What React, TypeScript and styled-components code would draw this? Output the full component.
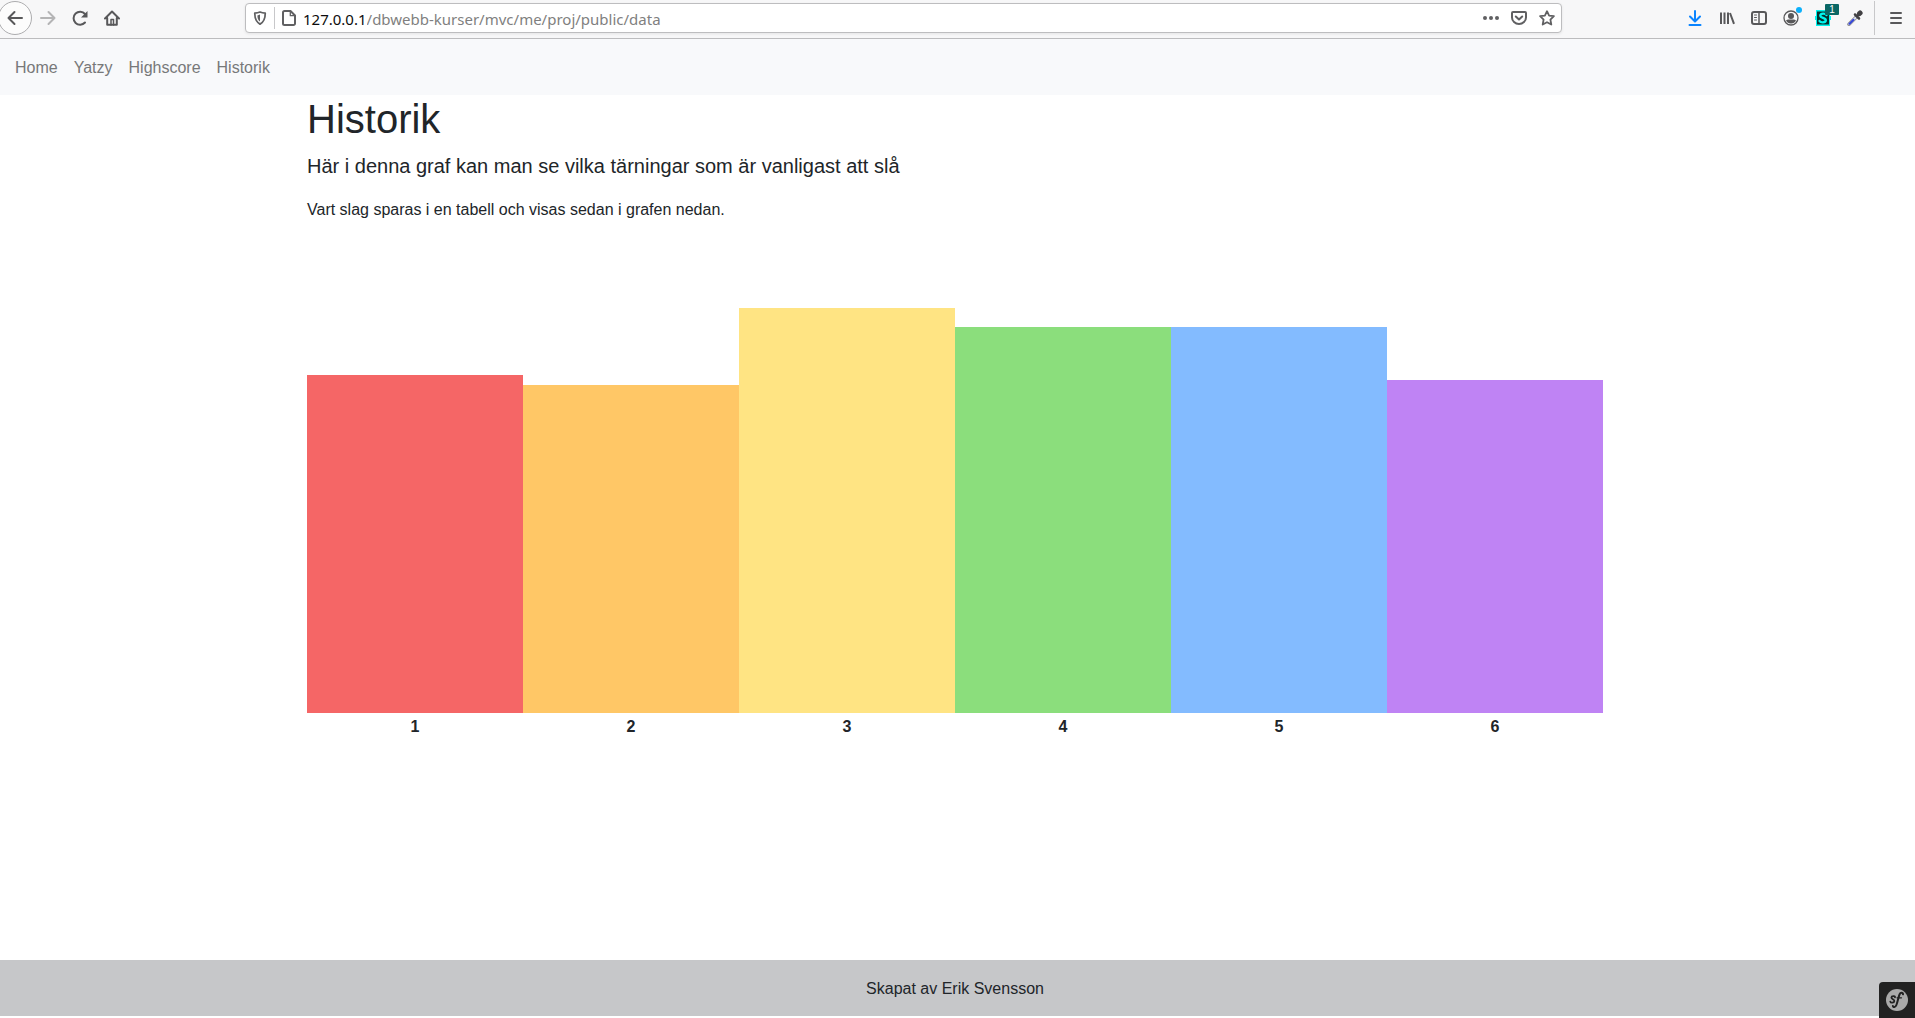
import React from 'react';
import styled, { createGlobalStyle } from 'styled-components';

const GlobalStyle = createGlobalStyle`
  *, *::before, *::after { box-sizing: border-box; }
  body {
    margin: 0;
    background: #fff;
    color: #212529;
    font-family: "Liberation Sans", Arial, sans-serif;
    font-size: 16px;
    line-height: 24px;
  }
`;

const Page = styled.div`
  display: flex;
  flex-direction: column;
  min-height: 100vh;
  padding-bottom: 2px;
  overflow-x: hidden;
`;

const Toolbar = styled.header`
  display: flex;
  align-items: center;
  height: 39px;
  padding: 0 3px 2px 0;
  background: #f7f7f8;
  border-bottom: 1px solid #bcbcbe;
`;

const ToolGroup = styled.div`
  display: flex;
  align-items: center;
`;

const ToolButton = styled.button<{ $muted?: boolean }>`
  position: relative;
  display: flex;
  align-items: center;
  justify-content: center;
  width: 32px;
  height: 32px;
  padding: 0;
  border: 0;
  background: none;
  color: ${(p) => (p.$muted ? '#b4b4b5' : '#58585a')};
`;

const BackButton = styled(ToolButton)`
  width: 34px;
  height: 34px;
  margin-left: -2px;
  border: 1px solid #adadaf;
  border-radius: 50%;
  background: #fcfcfc;
`;

const Separator = styled.span<{ $tall?: boolean }>`
  width: 1px;
  height: ${(p) => (p.$tall ? 34 : 22)}px;
  margin: ${(p) => (p.$tall ? '0 5px 0 3px' : '0')};
  background: #c8c8ca;
`;

const AddressBar = styled.form`
  display: flex;
  flex: 1;
  align-items: center;
  min-width: 0;
  height: 30px;
  margin: 0 117px;
  background: #fff;
  border: 1px solid #bdbdbf;
  border-radius: 4px;
  box-shadow: 0 1px 3px rgba(0, 0, 0, 0.08);
`;

const SmallButton = styled(ToolButton)`
  width: 28px;
  height: 28px;
  color: #606062;
`;

const AddressText = styled.div`
  display: flex;
  flex: 1;
  min-width: 0;
  padding-top: 1px;
  font-family: "Noto Sans", "Open Sans", sans-serif;
  font-size: 15px;
  line-height: 28px;
`;

const Host = styled.label`
  color: #0c0c0d;
`;

const PathInput = styled.input`
  flex: 1;
  min-width: 0;
  height: 28px;
  padding: 0;
  border: 0;
  outline: 0;
  background: none;
  color: #7f7f80;
  font: inherit;
`;

const Notice = styled.span`
  position: absolute;
  top: 5px;
  right: 5px;
  width: 6px;
  height: 6px;
  border-radius: 50%;
  background: #0cb0fb;
`;

const Badge = styled.span`
  position: absolute;
  top: 2px;
  right: 0;
  width: 14px;
  height: 11px;
  border-radius: 1px;
  background: #0a6765;
  color: #fff;
  font-size: 10px;
  line-height: 11px;
  text-align: center;
`;

const Nav = styled.nav`
  display: flex;
  gap: 16px;
  padding: 17px 15px 15px;
  background: #f8f9fb;
`;

const NavLink = styled.a`
  color: #777879;
  text-decoration: none;
`;

const Main = styled.main`
  display: flex;
  flex: 1;
  flex-direction: column;
  width: 100%;
  max-width: 1301px;
  margin: 0 auto;
  padding-right: 5px;
`;

const Title = styled.h1`
  margin: 0 0 8px;
  font-size: 40px;
  font-weight: 400;
  line-height: 48px;
`;

const Lead = styled.p`
  margin: 0 0 17px;
  font-size: 20px;
  line-height: 30px;
`;

const Text = styled.p`
  margin: 0;
`;

const Chart = styled.div`
  display: flex;
  align-items: flex-end;
  height: 517px;
`;

const Column = styled.div`
  flex: 1;
  font-weight: 700;
  text-align: center;
`;

const Bar = styled.div<{ $color: string }>`
  margin-bottom: 2px;
  background: ${(p) => p.$color};
`;

const Footer = styled.footer`
  padding: 17px 5px 15px 0;
  background: #c6c7c9;
  text-align: center;
`;

const ProfilerButton = styled.button`
  position: fixed;
  right: 0;
  bottom: 0;
  display: flex;
  align-items: center;
  justify-content: center;
  width: 36px;
  height: 36px;
  padding: 0;
  border: 0;
  border-radius: 4px 0 0 0;
  background: #222;
`;

const links = ['Home', 'Yatzy', 'Highscore', 'Historik'];

const rolls = [
  { face: 1, height: 338, color: '#f56666' },
  { face: 2, height: 328, color: '#ffc766' },
  { face: 3, height: 405, color: '#ffe483' },
  { face: 4, height: 386, color: '#8bde7c' },
  { face: 5, height: 386, color: '#83bbff' },
  { face: 6, height: 333, color: '#bf83f4' },
];

function Icon({ children, size = 16 }: { children: React.ReactNode; size?: number }) {
  return (
    <svg
      width={size}
      height={size}
      viewBox="0 0 16 16"
      fill="none"
      stroke="currentColor"
      strokeWidth="2"
      strokeLinecap="round"
      strokeLinejoin="round"
      aria-hidden="true"
    >
      {children}
    </svg>
  );
}

function BrowserBar() {
  return (
    <Toolbar>
      <ToolGroup>
        <BackButton aria-label="Back">
          <Icon><path d="M15 8H1.500M7.500 2 1.500 8l6 6" /></Icon>
        </BackButton>
        <ToolButton $muted aria-label="Forward">
          <Icon><path d="M1 8h13.500M8.500 2l6 6-6 6" /></Icon>
        </ToolButton>
        <ToolButton aria-label="Reload">
          <Icon>
            <path d="M13 12.500A6.500 6.500 0 1 1 13 4" />
            <path d="M15.500 1v6.500H9z" fill="currentColor" stroke="none" />
          </Icon>
        </ToolButton>
        <ToolButton aria-label="Home page">
          <Icon>
            <path d="M1 8.500 8 1.500l7 7M3.200 8v6.800h9.600V8" />
            <path d="M7 15V9.500h2.500V15" strokeWidth="1.500" />
          </Icon>
        </ToolButton>
      </ToolGroup>

      <AddressBar onSubmit={(e) => e.preventDefault()}>
        <SmallButton type="button" aria-label="Tracking protection">
          <Icon size={14}>
            <path d="M8 1.200c2 .9 4 1.200 6 1.300C14 8.500 12.500 12.500 8 15 3.500 12.500 2 8.500 2 2.500c2-.1 4-.4 6-1.300z" />
            <path d="M8 4v8C5.800 10.300 5 8 5 5z" fill="currentColor" stroke="none" />
          </Icon>
        </SmallButton>
        <Separator />
        <SmallButton type="button" aria-label="Site information">
          <Icon>
            <path d="M3.500 1h6L14 5.500v8a1.500 1.500 0 0 1-1.500 1.500h-9A1.500 1.500 0 0 1 2 13.500v-11A1.500 1.500 0 0 1 3.500 1z" />
            <path d="M9.300 1.500v4.200h4.200" strokeWidth="1.300" />
          </Icon>
        </SmallButton>
        <AddressText>
          <Host htmlFor="path">127.0.0.1</Host>
          <PathInput id="path" defaultValue="/dbwebb-kurser/mvc/me/proj/public/data" />
        </AddressText>
        <SmallButton type="button" aria-label="Page actions">
          <Icon>
            <g fill="currentColor" stroke="none">
              <circle cx="2" cy="8" r="2" />
              <circle cx="8" cy="8" r="2" />
              <circle cx="14" cy="8" r="2" />
            </g>
          </Icon>
        </SmallButton>
        <SmallButton type="button" aria-label="Save to Pocket">
          <Icon>
            <path d="M2 2h12a1 1 0 0 1 1 1v4.500a7 6.500 0 0 1-14 0V3a1 1 0 0 1 1-1z" />
            <path d="m4.800 6.500 3.200 3 3.200-3" />
          </Icon>
        </SmallButton>
        <SmallButton type="button" aria-label="Bookmark">
          <Icon>
            <path d="m8 1.200 2.100 4.400 4.800.6-3.500 3.400.9 4.900L8 12.200l-4.300 2.300.9-4.900L1.100 6.200l4.800-.6z" strokeWidth="1.800" />
          </Icon>
        </SmallButton>
      </AddressBar>

      <ToolGroup>
        <ToolButton aria-label="Downloads">
          <Icon>
            <path d="M8 1v10M3 6.500l5 5 5-5M2.500 15h11" stroke="#0a84ff" />
          </Icon>
        </ToolButton>
        <ToolButton aria-label="Library">
          <Icon>
            <path d="M2 2.500v11.500M5.500 2.500v11.500M9 2.500v11.500M11 3l4 10.800" strokeLinecap="butt" />
          </Icon>
        </ToolButton>
        <ToolButton aria-label="Sidebars">
          <Icon>
            <rect x="1" y="2" width="14" height="12" rx="2" />
            <path d="M8 2v12" strokeWidth="1.500" />
            <path d="M3.500 5h2M3.500 7.500h2M3.500 10h2" strokeWidth="1" />
          </Icon>
        </ToolButton>
        <ToolButton aria-label="Account">
          <Icon>
            <circle cx="8" cy="8" r="7" strokeWidth="1.300" />
            <circle cx="8" cy="6" r="3" fill="currentColor" stroke="none" />
            <path d="M3 10.500c1.500-1.300 2-1 5-1s3.500-.3 5 1A5.500 5.500 0 0 1 8 13.500a5.500 5.500 0 0 1-5-3z" fill="currentColor" stroke="none" />
          </Icon>
          <Notice />
        </ToolButton>
        <ToolButton aria-label="Stylus">
          <Icon>
            <path d="M1 0h14v6h1v4h-1v6H1v-6H0V6h1z" fill="#00f5ee" stroke="none" />
            <path d="M2 1.500h12v13H2z" fill="#07312f" stroke="none" />
            <path d="M11.500 5C10.500 3 5 3 5.300 5.800 5.600 8.300 11 7.500 10.800 10.400 10.600 13 5.500 12.800 4.500 11" stroke="#00f5ee" strokeWidth="2.400" />
          </Icon>
          <Badge>1</Badge>
        </ToolButton>
        <ToolButton aria-label="Color picker">
          <Icon>
            <path d="M2 14.200 9.300 7" stroke="#8e8e92" strokeWidth="3.600" />
            <path d="M2.200 14 8.800 7.500" stroke="#dce3f5" strokeWidth="1.800" />
            <path d="m2.500 13.700 4-4" stroke="#3546d8" strokeWidth="2" />
            <path d="m8 4.500 4 4M10.500 6 13 3.300" stroke="#414043" strokeWidth="2.500" />
            <path d="m12.500 3.500.6-.6" stroke="#414043" strokeWidth="5" />
          </Icon>
        </ToolButton>
        <Separator $tall />
        <ToolButton aria-label="Menu">
          <Icon>
            <path d="M3 3h10M3 8h10M3 13h10" />
          </Icon>
        </ToolButton>
      </ToolGroup>
    </Toolbar>
  );
}

export default function App() {
  return (
    <Page>
      <GlobalStyle />
      <BrowserBar />
      <Nav>
        {links.map((link) => (
          <NavLink key={link} href={`#${link.toLowerCase()}`}>{link}</NavLink>
        ))}
      </Nav>
      <Main>
        <Title>Historik</Title>
        <Lead>Här i denna graf kan man se vilka tärningar som är vanligast att slå</Lead>
        <Text>Vart slag sparas i en tabell och visas sedan i grafen nedan.</Text>
        <Chart>
          {rolls.map((roll) => (
            <Column key={roll.face}>
              <Bar $color={roll.color} style={{ height: roll.height }} />
              {roll.face}
            </Column>
          ))}
        </Chart>
      </Main>
      <Footer>Skapat av Erik Svensson</Footer>
      <ProfilerButton aria-label="Symfony profiler">
        <svg width="22" height="22" viewBox="0 0 22 22" fill="none" strokeLinecap="round" aria-hidden="true">
          <circle cx="11" cy="11" r="11" fill="#aaa" />
          <path d="M9 8.300c.3-1.700-3.500-1.600-3.600.2-.1 1.800 3.200 1.900 2.900 3.700-.2 1.900-3.700 2-4 .4" stroke="#222" strokeWidth="1.800" />
          <path d="M17 5.300c.2-2-2.600-2-3.500.2-1.200 3-1.900 7.500-3.100 10.500-.9 2.300-3.300 2.600-3.500 1" stroke="#222" strokeWidth="2" />
          <path d="M11 8.800h4.500" stroke="#222" strokeWidth="1.200" />
        </svg>
      </ProfilerButton>
    </Page>
  );
}
